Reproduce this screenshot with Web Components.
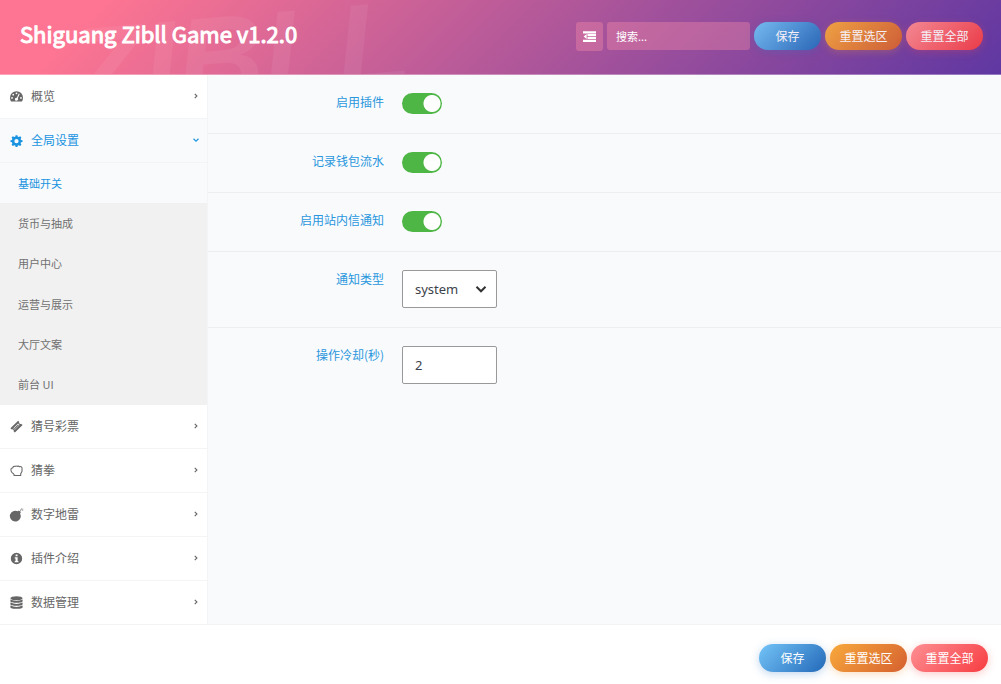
<!DOCTYPE html>
<html lang="zh-CN">
<head>
<meta charset="utf-8">
<meta name="viewport" content="width=device-width, initial-scale=1">
<title>Shiguang Zibll Game</title>
<style>
body { margin: 0; background: #fff; color: #555; font: 12px/20px "Noto Sans CJK SC", sans-serif; }
</style>
</head>
<body>
<options-page></options-page>
<script>
const ICONS = {
  gauge: '<path fill-rule="evenodd" d="M8 1.500A8 8 0 0 0 0 9.500c0 1.700.5 3.200 1.200 4.500h13.600c.7-1.300 1.200-2.800 1.200-4.500a8 8 0 0 0-8-8zM8 3a1.100 1.100 0 1 1 0 2.200A1.100 1.100 0 0 1 8 3zM4 4.700a1.100 1.100 0 1 1 0 2.200 1.100 1.100 0 0 1 0-2.200zM2.500 8.600a1.100 1.100 0 1 1 0 2.200 1.100 1.100 0 0 1 0-2.200zM13.500 8.600a1.100 1.100 0 1 1 0 2.200 1.100 1.100 0 0 1 0-2.200zM10.800 4.300l1.100.5-2.300 5.200A2 2 0 1 1 6 11.400a2 2 0 0 1 2.400-1.900z"/>',
  cog: '<path fill-rule="evenodd" d="M6.900 1.500h2.200l.5 1.800 1.200.5 1.700-.9 1.500 1.500-.9 1.700.5 1.200 1.800.5v2l-1.800.5-.5 1.200.9 1.700-1.500 1.500-1.700-.9-1.200.5-.5 1.700H6.900l-.5-1.700-1.200-.5-1.700.9L2 13.200l.9-1.700-.5-1.200L.6 9.800v-2l1.800-.5.5-1.200L2 4.400l1.500-1.500 1.700.9 1.200-.5zM8 6.200a2.600 2.600 0 1 0 0 5.200 2.600 2.600 0 0 0 0-5.200z"/>',
  ticket: '<path fill-rule="evenodd" d="M10 1l1.400 1.400a1.600 1.600 0 0 0 2.200 2.200L15.500 6 6 15.500l-1.600-1.600a1.600 1.600 0 0 0-2.200-2.200L.5 10zM9.900 4.400l-5.800 5.800 1.900 1.900 5.800-5.800zM9.900 5.400l1 1-5 5-1-1z"/>',
  fist: '<path fill="none" stroke="currentColor" stroke-width="1.300" stroke-linejoin="round" d="M5 14.200v-1.500L2.300 10.300C1 9 1 7.500 1.200 6.200c.2-1 1-1.500 2.200-1.300C3.500 3.300 5 2.400 6.300 3c.6-.8 2-.8 2.700 0 .8-.6 2-.5 2.500.3 1.500-.4 3.300.2 3.300 1.800v3.700l-1.600 3.300v2.100z"/>',
  bomb: '<path d="M6.800 3.300c1 0 2 .2 2.900.7l1-1 1 1 .9-.9.700.7-.9.900 1 1-1 1a6.700 6.700 0 1 1-5.600-3.400z"/><path d="M12.400 2.600l1-1 .8.8-1 1zM14.100.3h.8v1.500h-.8zM14.900 2.700h1.400v.8h-1.400zM15.100 1.500l.9-.9.500.6-.9.800z"/>',
  info: '<path fill-rule="evenodd" d="M8 1a7 7 0 1 1 0 14A7 7 0 0 1 8 1zM6.900 3v2.200h2.400V3zM5.800 6.400v1.500h1v3.300h-1v1.500h4.600v-1.500h-1V6.400z"/>',
  database: '<ellipse cx="8" cy="2.700" rx="7.500" ry="2.500"/><path d="M.5 4.300q7.500 3.500 15 0v2.200c0 2.600-15 2.600-15 0zM.5 8q7.500 3.500 15 0v2.200c0 2.600-15 2.600-15 0zM.5 11.700q7.500 3.500 15 0v2c0 2.800-15 2.800-15 0z"/>',
  outdent: '<path d="M0 1.500h16v2.800H0zM5.500 5h10.500v2.600H5.500zM5.500 8.500h10.500v2.600H5.500zM0 11.900h16v2.800H0zM4.500 5v6.200L.8 8.100z"/>',
  right: '<path fill="none" stroke="currentColor" stroke-width="1.800" d="M6 4.500L9.500 8 6 11.500"/>',
  down: '<path fill="none" stroke="currentColor" stroke-width="1.800" d="M4 6l4 4 4-4"/>'
};

function define(name, markup, setup) {
  const template = document.createElement('template');
  template.innerHTML = markup;
  customElements.define(name, class extends HTMLElement {
    connectedCallback() {
      if (this.shadowRoot) return;
      const root = this.attachShadow({ mode: 'open' });
      root.append(template.content.cloneNode(true));
      if (setup) setup(this, root);
    }
  });
}

define('ui-icon', `
<style>
  :host { display: inline-flex; flex: none; width: 13px; height: 13px; }
  svg { width: 100%; height: 100%; fill: currentColor; overflow: visible; }
</style>
<svg viewBox="0 0 16 16" aria-hidden="true"></svg>`,
  (el, root) => { root.querySelector('svg').innerHTML = ICONS[el.getAttribute('name')]; });

define('pill-button', `
<style>
  :host { display: block; }
  button { display: block; min-width: 77px; height: 28px; padding: 0 14px; border: 0; border-radius: 14px; color: #fff;
    font: inherit; line-height: 28px; white-space: nowrap; cursor: pointer;
    background: linear-gradient(135deg, var(--from), var(--to)); box-shadow: 0 2px 8px var(--glow); }
  :host([kind="save"]) button { min-width: 67px; --from: #74c4f8; --to: #2369b9; --glow: #2d78c84d; }
  :host([kind="section"]) button { --from: #f8a93c; --to: #d5602f; --glow: #f096324d; }
  :host([kind="all"]) button { --from: #fd8f93; --to: #f73c41; --glow: #fa50504d; }
</style>
<button type="button"><slot></slot></button>`);

define('action-group', `
<style>
  :host { display: flex; gap: 4px; }
</style>
<pill-button kind="save">保存</pill-button>
<pill-button kind="section">重置选区</pill-button>
<pill-button kind="all">重置全部</pill-button>`);

define('page-header', `
<style>
  :host { display: block; }
  header { position: relative; overflow: hidden; display: flex; align-items: center; justify-content: space-between;
    gap: 16px; box-sizing: border-box; min-height: 75px; padding: 0 18px 2px 20px; color: #fff;
    border-bottom: 1px solid #ffffff55;
    background: linear-gradient(135deg, #fd7592 0%, #fd7592 10%, #5f37a2 100%) border-box; }
  .mark { position: absolute; left: 70px; top: -4px; font: italic 900 120px/120px "Liberation Sans", sans-serif;
    color: #ffffff10; transform: rotate(-5deg); pointer-events: none; }
  h1 { position: relative; margin: 0 0 6px; font-size: 22px; line-height: 32px; font-weight: 400; white-space: nowrap;
    -webkit-text-stroke: 1px #fff; }
  .tools { position: relative; display: flex; gap: 4px; }
  .fold { display: flex; align-items: center; justify-content: center; width: 27px; height: 29px; padding: 0;
    border: 0; border-radius: 3px; background: #ff91aa59; color: #fff; cursor: pointer; }
  input { box-sizing: border-box; width: 143px; height: 28px; padding: 0 9px; border: 0; border-radius: 3px;
    background: #ff91aa59; color: #fff; font: inherit; font-size: 11px; }
  input::placeholder { color: #fff; opacity: 1; }
  action-group { opacity: .92; }
</style>
<header>
  <span class="mark" aria-hidden="true">ZIBLL</span>
  <h1><slot></slot></h1>
  <div class="tools">
    <button class="fold" type="button" aria-label="展开全部"><ui-icon name="outdent"></ui-icon></button>
    <input type="text" placeholder="搜索..." aria-label="搜索">
    <action-group></action-group>
  </div>
</header>`);

define('nav-item', `
<style>
  :host { display: block; border-bottom: 1px solid #f3f4f5; }
  a { display: flex; align-items: center; gap: 8px; height: 42px; padding: 0 6px 1px 10px; color: #666; text-decoration: none; }
  span { flex: 1; }
  .arrow { width: 10px; height: 10px; }
  :host([open]) { background: #f8fafc; }
  :host([open]) a { color: #1a94e0; }
</style>
<a href="#"><ui-icon></ui-icon><span><slot></slot></span><ui-icon class="arrow"></ui-icon></a>`,
  (el, root) => {
    const [icon, arrow] = root.querySelectorAll('ui-icon');
    for (const [node, name] of [[icon, el.getAttribute('icon')], [arrow, el.hasAttribute('open') ? 'down' : 'right']]) {
      const next = document.createElement('ui-icon');
      next.className = node.className;
      next.setAttribute('name', name);
      node.replaceWith(next);
    }
  });

define('sub-item', `
<style>
  :host { display: grid; background: #f1f1f1; }
  a { display: flex; align-items: center; padding: 0 18px 1px; color: #707070; font-size: 11px; text-decoration: none; }
  :host([current]) { background: #f8fafc; }
  :host([current]) a { color: #1a94e0; }
</style>
<a href="#"><slot></slot></a>`);

define('side-nav', `
<style>
  :host { display: block; background: #fff; border-right: 1px solid #f2f4f6; }
  .sub { display: grid; grid-auto-rows: 1fr; height: 242px; }
  nav > nav-item:last-child { border-bottom: 0; }
</style>
<nav>
  <nav-item icon="gauge">概览</nav-item>
  <nav-item icon="cog" open>全局设置</nav-item>
  <div class="sub">
    <sub-item current>基础开关</sub-item>
    <sub-item>货币与抽成</sub-item>
    <sub-item>用户中心</sub-item>
    <sub-item>运营与展示</sub-item>
    <sub-item>大厅文案</sub-item>
    <sub-item>前台 UI</sub-item>
  </div>
  <nav-item icon="ticket">猜号彩票</nav-item>
  <nav-item icon="fist">猜拳</nav-item>
  <nav-item icon="bomb">数字地雷</nav-item>
  <nav-item icon="info">插件介绍</nav-item>
  <nav-item icon="database">数据管理</nav-item>
</nav>`);

define('field-row', `
<style>
  :host { display: block; border-bottom: 1px solid #eceff1; }
  :host(:last-of-type) { border-bottom: 0; }
  div { display: grid; grid-template-columns: 158px 1fr; column-gap: 18px; align-items: start; padding: 18px 18px 19px; }
  label { color: #2a97dc; text-align: right; line-height: 18px; }
  .control { display: grid; justify-content: start; align-items: center; }
  .control > * { grid-area: 1 / 1; }
  input, select { appearance: none; box-sizing: border-box; margin: 0; color: #3c434a; }
  .switch { width: 40px; height: 21px; border-radius: 11px; cursor: pointer;
    background: radial-gradient(circle at 30px 50%, #fff 8px, #4eb645 9px); }
  .box { width: 95px; height: 38px; padding: 0 12px; border: 1px solid #999; border-radius: 2px; background: #fff;
    font: 13px/20px "Noto Sans", "Noto Sans CJK SC", sans-serif; }
  .chevron { justify-self: end; width: 18px; height: 18px; margin-right: 7px; color: #333; pointer-events: none; }
</style>
<div><label for="field"></label><span class="control"></span></div>`,
  (el, root) => {
    const label = root.querySelector('label');
    const value = el.getAttribute('value') || '';
    label.textContent = el.getAttribute('label');
    root.querySelector('.control').innerHTML = {
      switch: '<input id="field" class="switch" type="checkbox" role="switch" checked>',
      select: `<select id="field" class="box"><option>${value}</option></select><ui-icon class="chevron" name="down"></ui-icon>`,
      text: `<input id="field" class="box" type="text" value="${value}">`
    }[el.getAttribute('type')];
  });

define('options-page', `
<style>
  :host { display: block; }
  .body { display: grid; grid-template-columns: 208px 1fr; border-bottom: 1px solid #f1f3f5; }
  main { background: #f8fafc; }
  footer { display: flex; justify-content: flex-end; padding: 19px 13px 12px; }
</style>
<page-header>Shiguang Zibll Game v1.2.0</page-header>
<div class="body">
  <side-nav></side-nav>
  <main>
    <field-row type="switch" label="启用插件"></field-row>
    <field-row type="switch" label="记录钱包流水"></field-row>
    <field-row type="switch" label="启用站内信通知"></field-row>
    <field-row type="select" label="通知类型" value="system"></field-row>
    <field-row type="text" label="操作冷却(秒)" value="2"></field-row>
  </main>
</div>
<footer><action-group></action-group></footer>`);
</script>
</body>
</html>
